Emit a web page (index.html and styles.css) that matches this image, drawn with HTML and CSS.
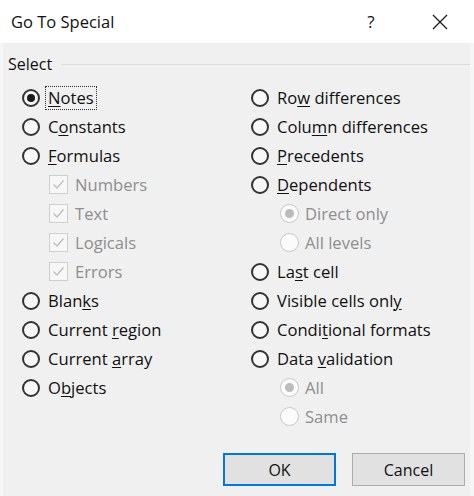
FILE: index.html
```html
<!DOCTYPE html>
<html>
<head>
<meta charset="utf-8">
<link rel="stylesheet" href="styles.css">
</head>
<body>
<div class="dialog">
  <div class="titlebar">
    <span class="title">Go To Special</span>
    <span class="help">?</span>
    <span class="close"><svg width="16" height="16" viewBox="0 0 16 16"><path d="M1 1 L15 15 M15 1 L1 15" stroke="#1a1a1a" stroke-width="1.3" fill="none"/></svg></span>
  </div>
  <div class="body">
    <div class="legend"><span class="legend-text">Select</span><span class="legend-line"></span></div>
    <div class="cols">
      <div class="col left">
        <div class="row"><span class="radio checked"></span><span class="label focus"><u>N</u>otes</span></div>
        <div class="row"><span class="radio"></span><span class="label">C<u>o</u>nstants</span></div>
        <div class="row"><span class="radio"></span><span class="label"><u>F</u>ormulas</span></div>
        <div class="row sub"><span class="check"><svg width="13" height="13" viewBox="0 0 13 13"><path d="M1.5 6.5 L5 10 L11.5 2.5" stroke="#bdbdbd" stroke-width="1.3" fill="none"/></svg></span><span class="label dis">Numbers</span></div>
        <div class="row sub"><span class="check"><svg width="13" height="13" viewBox="0 0 13 13"><path d="M1.5 6.5 L5 10 L11.5 2.5" stroke="#bdbdbd" stroke-width="1.3" fill="none"/></svg></span><span class="label dis">Text</span></div>
        <div class="row sub"><span class="check"><svg width="13" height="13" viewBox="0 0 13 13"><path d="M1.5 6.5 L5 10 L11.5 2.5" stroke="#bdbdbd" stroke-width="1.3" fill="none"/></svg></span><span class="label dis">Logicals</span></div>
        <div class="row sub"><span class="check"><svg width="13" height="13" viewBox="0 0 13 13"><path d="M1.5 6.5 L5 10 L11.5 2.5" stroke="#bdbdbd" stroke-width="1.3" fill="none"/></svg></span><span class="label dis">Errors</span></div>
        <div class="row"><span class="radio"></span><span class="label">Blan<u>k</u>s</span></div>
        <div class="row"><span class="radio"></span><span class="label">Current <u>r</u>egion</span></div>
        <div class="row"><span class="radio"></span><span class="label">Current <u>a</u>rray</span></div>
        <div class="row"><span class="radio"></span><span class="label">O<u>b</u>jects</span></div>
      </div>
      <div class="col right">
        <div class="row"><span class="radio"></span><span class="label">Ro<u>w</u> differences</span></div>
        <div class="row"><span class="radio"></span><span class="label">Colu<u>m</u>n differences</span></div>
        <div class="row"><span class="radio"></span><span class="label"><u>P</u>recedents</span></div>
        <div class="row"><span class="radio"></span><span class="label"><u>D</u>ependents</span></div>
        <div class="row sub"><span class="radio dis checked"></span><span class="label dis">Direct only</span></div>
        <div class="row sub"><span class="radio dis"></span><span class="label dis">All levels</span></div>
        <div class="row"><span class="radio"></span><span class="label">La<u>s</u>t cell</span></div>
        <div class="row"><span class="radio"></span><span class="label">Visible cells onl<u>y</u></span></div>
        <div class="row"><span class="radio"></span><span class="label">Condi<u>t</u>ional formats</span></div>
        <div class="row"><span class="radio"></span><span class="label">Data <u>v</u>alidation</span></div>
        <div class="row sub"><span class="radio dis checked"></span><span class="label dis">All</span></div>
        <div class="row sub"><span class="radio dis"></span><span class="label dis">Same</span></div>
      </div>
    </div>
    <div class="buttons">
      <button class="btn default">OK</button>
      <button class="btn">Cancel</button>
    </div>
  </div>
</div>
</body>
</html>
```
FILE: styles.css
```css
* { box-sizing: border-box; }
html, body { margin: 0; padding: 0; }
body {
  width: 474px;
  height: 496px;
  overflow: hidden;
  font-family: "Open Sans", "Noto Sans", sans-serif;
  color: #111;
  background: #f0f0f0;
}
.dialog { width: 474px; height: 496px; display: flex; flex-direction: column; }
.titlebar {
  height: 43px;
  background: #fff;
  display: flex;
  align-items: center;
  padding-left: 11px;
  flex-shrink: 0;
}
.title { font-size: 16.5px; color: #111; flex: 1; padding-bottom: 1px; }
.help { font-size: 17px; color: #111; width: 24px; text-align: center; margin-right: 49px; }
.close { width: 16px; height: 16px; margin-right: 26px; display: flex; }
.body {
  flex: 1;
  background: #f0f0f0;
  border-left: 3px solid #f6f6f6;
  border-right: 4px solid #f6f6f6;
  padding: 0 0 0 5px;
  display: flex;
  flex-direction: column;
}
.legend {
  display: flex;
  align-items: center;
  height: 26px;
  margin-top: 8px;
}
.legend-text { font-size: 16px; color: #111; }
.legend-line { flex: 1; height: 1px; background: #dcdcdc; margin-left: 9px; margin-right: 0; }
.cols { display: grid; grid-template-columns: 221px 1fr; margin-top: 6px; }
.col.left { padding-left: 14px; }
.col.right { padding-left: 22px; }
.row { height: 29px; display: flex; align-items: center; }
.row.sub { padding-left: 29px; }
.col.left .row.sub { padding-left: 27px; }
.radio {
  width: 18px; height: 18px;
  border: 2px solid #333;
  border-radius: 50%;
  background: #f7f7f7;
  display: flex; align-items: center; justify-content: center;
  flex-shrink: 0;
}
.radio.checked::after {
  content: "";
  width: 8px; height: 8px; border-radius: 50%; background: #1b1b1b;
}
.radio.dis { border: 1px solid #c8c8c8; background: #fbfbfb; width: 19px; height: 19px; }
.radio.dis.checked::after { background: #bcbcbc; width: 9px; height: 9px; }
.label { font-size: 16.6px; margin-left: 5px; padding: 0 2px; border: 1px solid transparent; line-height: 22px; }
.sub .label { margin-left: 3px; }
.col.left .sub .label { margin-left: 4px; }
.label u { text-decoration-thickness: 1px; text-underline-offset: 2px; }
.label.dis { color: #8e8e8e; }
.label.focus { border: 1px dotted #333; }
.check {
  width: 19px; height: 19px;
  border: 1px solid #cfcfcf;
  background: #f7f7f7;
  display: flex; align-items: center; justify-content: center;
  flex-shrink: 0;
}
.buttons {
  display: flex;
  justify-content: flex-end;
  gap: 16px;
  margin-top: 22px;
  padding-right: 5px;
}
.btn {
  width: 113px; height: 33px;
  font-family: "Open Sans", "Noto Sans", sans-serif;
  font-size: 16px;
  color: #111;
  background: #e1e1e1;
  border: 1px solid #adadad;
  padding: 0;
}
.btn.default { border: 2px solid #0078d7; }
```
